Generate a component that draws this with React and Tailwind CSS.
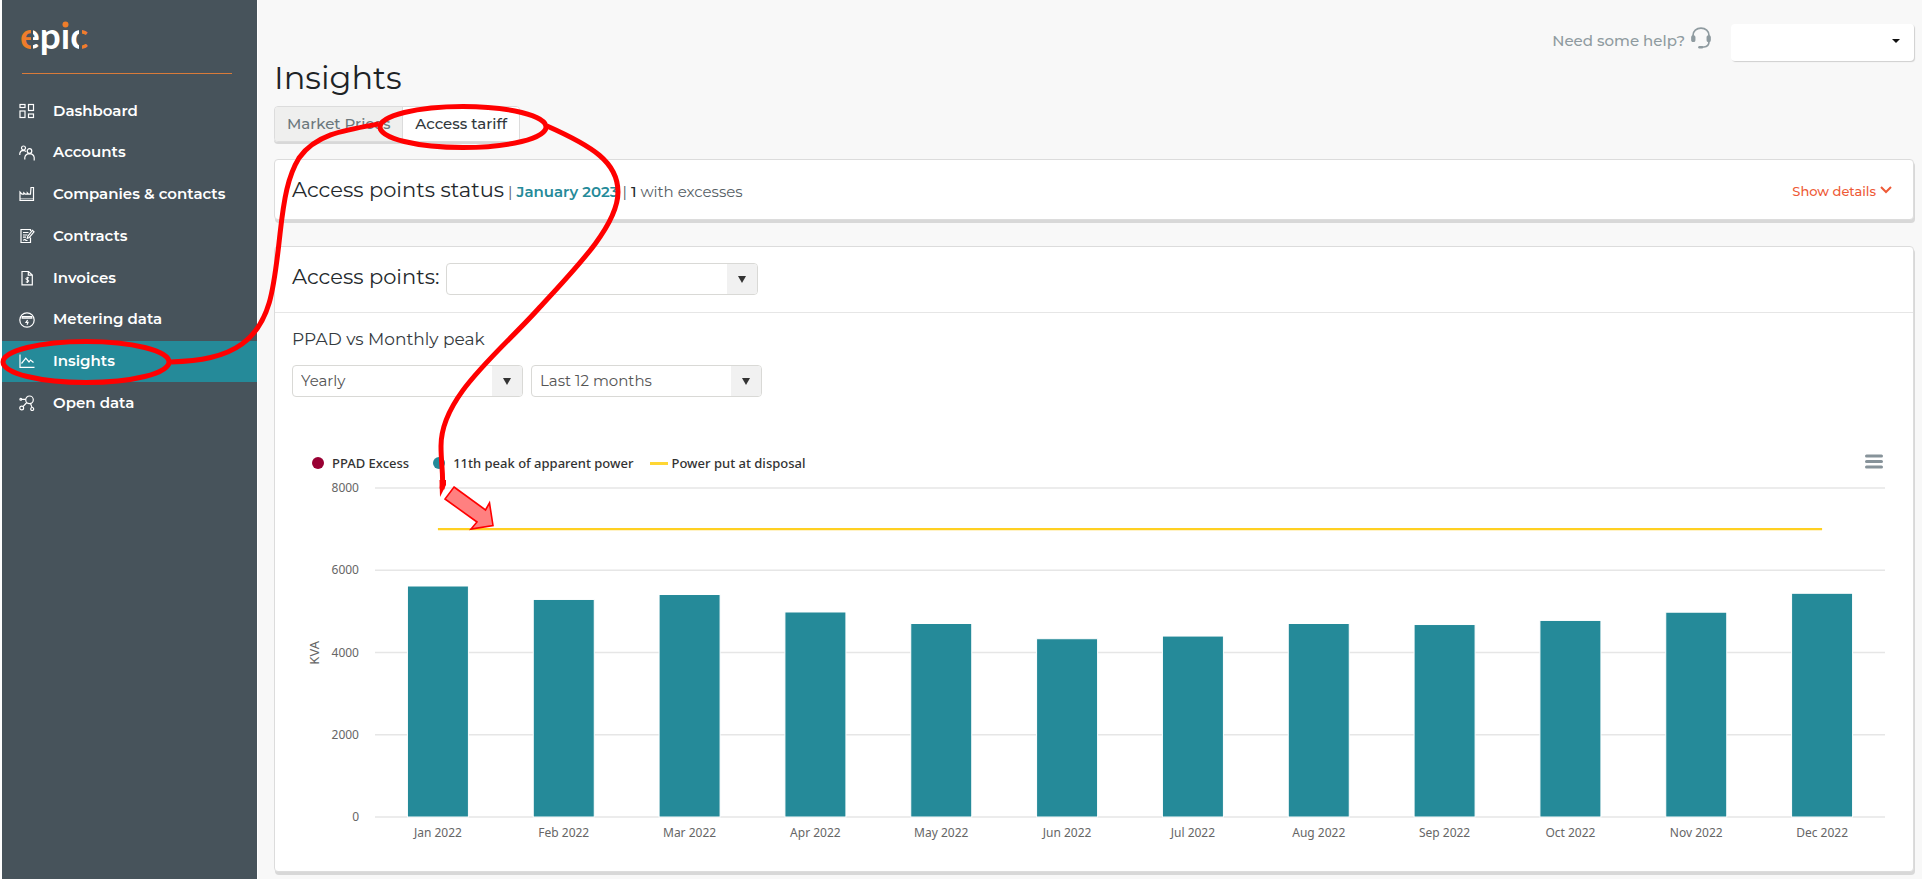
import React, { useState } from "react";
import clsx from "clsx";

const iconProps = {
    viewBox: "0 0 16 16",
    className: "w-4 h-4 shrink-0",
    fill: "none",
    stroke: "currentColor",
    strokeWidth: 1.2,
    "aria-hidden": true,
};

const DashboardIcon = () => (
    <svg {...iconProps}>
        <rect x="1" y="1.5" width="5" height="3" />
        <rect x="1" y="8" width="5" height="6.5" />
        <rect x="9.5" y="1.5" width="5" height="6" />
        <rect x="9.5" y="11" width="5" height="3.5" />
    </svg>
);

const AccountsIcon = () => (
    <svg {...iconProps}>
        <circle cx="4.5" cy="3" r="2" />
        <circle cx="10.5" cy="6" r="2.3" />
        <path d="M0.8 10V8.5Q1.2 5.5 4.3 5.3Q6 5.4 7 6.6M5.8 14.5V12.5Q6.3 8.7 10.5 8.6Q14.7 8.8 15.2 12.5V15.5" />
    </svg>
);

const CompaniesIcon = () => (
    <svg {...iconProps}>
        <path d="M1 6V14.4H14.5V1.5H12L11.5 8.2H9.5L8.3 6.8V8.2H6.5L4.8 6.8V8.2H3L1 6Z" />
        <path d="M1 12.5H14.5" strokeWidth="0.5" />
    </svg>
);

const ContractsIcon = () => (
    <svg {...iconProps}>
        <path d="M11.5 9.5V14.5H2V1.5H11.5V3M4 4.5H9.5M4 7H8.5M4 9.2H7M4 12.2L6 11.5L7 12.5H8.5" />
        <path d="M8.3 10.2L8.8 8.2L13.4 2.4L15 3.8L10.3 9.5Z" />
    </svg>
);

const InvoicesIcon = () => (
    <svg {...iconProps}>
        <path d="M3 1.5H9.5L13.3 5V14.8H3ZM9.3 1.5V5.2H13.3" />
        <path d="M10 7.8H8Q6.9 7.8 6.9 8.8Q6.9 9.8 8.3 9.8Q9.8 9.8 9.8 11Q9.8 12 8.5 12H6.8M8.4 6.8V13" strokeWidth="1" />
    </svg>
);

const MeteringIcon = () => (
    <svg {...iconProps}>
        <circle cx="8" cy="8" r="7.2" />
        <path d="M3.2 4.6H12.8V6.2H3.2Z" />
        <path d="M8.6 8L7 10.4H9L8 12.8" />
    </svg>
);

const InsightsIcon = () => (
    <svg {...iconProps}>
        <path d="M1 1.5V14.3H15.5" />
        <path d="M2.5 10.5L6.8 5.2L10 9L11.5 7L14.5 9.5" />
    </svg>
);

const OpenDataIcon = () => (
    <svg {...iconProps}>
        <circle cx="10.5" cy="4.8" r="3.8" />
        <circle cx="2.7" cy="13" r="1.9" />
        <circle cx="13.2" cy="14" r="1.5" />
        <circle cx="1.8" cy="4.2" r="0.9" />
        <path d="M2.7 4.3H6.7M7.8 7.5L4 11.6M11.5 8.5L13 12.4" />
    </svg>
);

const navItems = [
    { label: "Dashboard", icon: DashboardIcon },
    { label: "Accounts", icon: AccountsIcon },
    { label: "Companies & contacts", icon: CompaniesIcon },
    { label: "Contracts", icon: ContractsIcon },
    { label: "Invoices", icon: InvoicesIcon },
    { label: "Metering data", icon: MeteringIcon },
    { label: "Insights", icon: InsightsIcon },
    { label: "Open data", icon: OpenDataIcon },
];

const peaks = [
    { month: "Jan 2022", value: 5617 },
    { month: "Feb 2022", value: 5290 },
    { month: "Mar 2022", value: 5410 },
    { month: "Apr 2022", value: 4985 },
    { month: "May 2022", value: 4705 },
    { month: "Jun 2022", value: 4335 },
    { month: "Jul 2022", value: 4400 },
    { month: "Aug 2022", value: 4705 },
    { month: "Sep 2022", value: 4680 },
    { month: "Oct 2022", value: 4780 },
    { month: "Nov 2022", value: 4980 },
    { month: "Dec 2022", value: 5440 },
];

const MAX_KVA = 8000;
const PPAD_KVA = 7000;
const ticks = [8000, 6000, 4000, 2000, 0];

const Logo = () => (
    <svg viewBox="0 0 80 50" className="h-[50px] w-20 overflow-visible" role="img" aria-label="epic">
        <defs>
            <linearGradient id="epicFill" gradientUnits="userSpaceOnUse" x1="0" y1="0" x2="80" y2="0">
                <stop offset="0.112" stopColor="#ee7d2b" />
                <stop offset="0.112" stopColor="#47535b" />
                <stop offset="0.142" stopColor="#47535b" />
                <stop offset="0.142" stopColor="#fff" />
                <stop offset="0.715" stopColor="#fff" />
                <stop offset="0.715" stopColor="#47535b" />
                <stop offset="0.755" stopColor="#47535b" />
                <stop offset="0.755" stopColor="#ee7d2b" />
            </linearGradient>
        </defs>
        <text x="-2" y="31" fontFamily="Lato, sans-serif" fontWeight="700" fontSize="37" fill="url(#epicFill)">epic</text>
        <rect x="38" y="0" width="11" height="10" fill="#47535b" />
        <circle cx="43.5" cy="6.5" r="3" fill="#ee7d2b" />
    </svg>
);

const Sidebar = () => (
    <aside className="w-[258px] shrink-0 border-l-2 border-r border-white bg-[#47535b] text-white">
        <div className="mr-[25px] ml-5 h-[74px] border-b border-[#d97b3a] pt-[18px]">
            <Logo />
        </div>
        <nav className="mt-4 grid h-[334px] auto-rows-fr">
            {navItems.map(({ label, icon: Icon }) => (
                <a
                    key={label}
                    href="#"
                    className={clsx(
                        "flex items-center gap-[18px] pl-[17px] text-[15px] font-semibold",
                        label === "Insights" && "bg-[#258a99]"
                    )}
                >
                    <Icon />
                    {label}
                </a>
            ))}
        </nav>
    </aside>
);

const SelectBox = ({ id, label, options, className }) => (
    <div className={clsx("grid h-8 grid-cols-[1fr_30px] overflow-hidden rounded border border-[#d9d9d6] bg-white", className)}>
        <select
            id={id}
            aria-label={label}
            className="col-span-2 col-start-1 row-start-1 appearance-none bg-transparent pl-2 text-[15px] text-[#555] outline-none"
        >
            {options.map((option) => (
                <option key={option}>{option}</option>
            ))}
        </select>
        <span className="pointer-events-none col-start-2 row-start-1 flex items-center justify-center bg-[#f1f1f1]">
            <svg viewBox="0 0 8 7" className="h-[7px] w-2" fill="#333"><path d="M0 0H8L4 7Z" /></svg>
        </span>
    </div>
);

const Header = () => (
    <header className="flex items-start justify-between">
        <h1 className="mt-[58px] text-[32px] leading-10 text-[#1d2326]">Insights</h1>
        <div className="mt-6 flex h-[37px]">
            <a href="#" className="flex h-[34px] items-center gap-1.5 text-[15px] font-medium text-[#8f9ba0]">
                Need some help?
                <svg viewBox="0 0 20 22" className="mb-1.5 h-[22px] w-5" fill="none" stroke="currentColor" strokeWidth="1.7">
                    <path d="M2 9V8.5C2 4 5.5 1.2 10 1.2S18 4 18 8.5V14.5C18 17.5 16 19.8 13 20H9" />
                    <rect x="1" y="9" width="2.6" height="5.2" rx="1" fill="currentColor" />
                    <rect x="16.4" y="9" width="2.6" height="5.2" rx="1" fill="currentColor" />
                    <path d="M8.4 20.2H11" strokeWidth="2.4" strokeLinecap="round" />
                </svg>
            </a>
            <div className="ml-5 grid w-[183px] grid-cols-[1fr_36px] rounded bg-white shadow-[1px_1px_1px_#cfcfcf]">
                <select aria-label="Account" className="col-span-2 col-start-1 row-start-1 appearance-none bg-transparent outline-none">
                    <option></option>
                </select>
                <span className="pointer-events-none col-start-2 row-start-1 flex items-center justify-center pb-1">
                    <svg viewBox="0 0 8 4" className="h-1 w-2" fill="#111"><path d="M0 0H8L4 4Z" /></svg>
                </span>
            </div>
        </div>
    </header>
);

const Tabs = () => {
    const [active, setActive] = useState("Access tariff");

    return (
        <div role="tablist" className="mt-2 flex h-9 w-[246px] overflow-hidden rounded border border-[#dcdcdc] shadow-[0_2px_0_#d8d8d8]">
            {["Market Prices", "Access tariff"].map((tab) => (
                <button
                    key={tab}
                    role="tab"
                    aria-selected={tab === active}
                    onClick={() => setActive(tab)}
                    className={clsx(
                        "grow pt-px text-[15px] font-medium",
                        tab === active ? "border-l border-[#dcdcdc] bg-white text-[#30383c]" : "bg-[#efefee] text-[#6b777c]"
                    )}
                >
                    {tab}
                </button>
            ))}
        </div>
    );
};

const StatusCard = () => (
    <section className="mt-[17px] flex h-[61px] items-center justify-between rounded border border-[#dcdcdc] bg-white pr-[21px] pl-[17px] shadow-[1px_3px_0_#d8d8d8]">
        <div className="flex items-baseline gap-1 text-[15px] text-[#566065]">
            <h2 className="text-[21px] text-[#24292c]">Access points status</h2>
            <span>|</span>
            <span className="font-semibold text-[#258a99]">January 2023</span>
            <span>|</span>
            <span><b className="font-medium text-[#24292c]">1</b> with excesses</span>
        </div>
        <button className="flex items-center gap-1 pt-1 text-[13px] font-medium text-[#ee5a36]">
            Show details
            <svg viewBox="0 0 12 8" className="mb-1 h-2 w-3" fill="none" stroke="currentColor" strokeWidth="2">
                <path d="M1 1L6 6L11 1" />
            </svg>
        </button>
    </section>
);

const Legend = () => (
    <div className="flex items-center font-['Noto_Sans',sans-serif] text-[13px] leading-5 font-medium text-[#333]">
        <span className="mr-2 h-3 w-3 rounded-full bg-[#990033]" />
        PPAD Excess
        <span className="mr-2 ml-6 h-3 w-3 rounded-full bg-[#258a99]" />
        11th peak of apparent power
        <span className="mr-1 ml-4 h-[3px] w-[18px] bg-[#ffd633]" />
        Power put at disposal
        <button aria-label="Chart menu" className="mr-0.5 mb-1 ml-auto">
            <svg viewBox="0 0 18 15" className="h-[15px] w-[18px]" stroke="#87939a" strokeWidth="3" strokeLinecap="round">
                <path d="M1.5 2H16.5M1.5 7.5H16.5M1.5 13H16.5" />
            </svg>
        </button>
    </div>
);

const Plot = () => {
    const step = 100 / peaks.length;

    return (
        <svg className="h-[329px] w-full overflow-visible" role="img" aria-label="Monthly peak in KVA">
            {ticks.map((tick) => {
                const y = `${100 - (tick / MAX_KVA) * 100}%`;
                return <line key={tick} x1="0" x2="100%" y1={y} y2={y} stroke="#e6e6e6" strokeWidth="1.5" />;
            })}
            {peaks.map(({ month, value }, i) => (
                <svg key={month} x={`${(i + 0.5) * step}%`} overflow="visible">
                    <rect
                        x="-30.5"
                        y={`${100 - (value / MAX_KVA) * 100}%`}
                        width="61"
                        height={`${(value / MAX_KVA) * 100}%`}
                        fill="#258a99"
                        stroke="#fff"
                        strokeWidth="1"
                    />
                </svg>
            ))}
            <line
                x1={`${step / 2}%`}
                x2={`${100 - step / 2}%`}
                y1={`${100 - (PPAD_KVA / MAX_KVA) * 100}%`}
                y2={`${100 - (PPAD_KVA / MAX_KVA) * 100}%`}
                stroke="#ffd022"
                strokeWidth="2.4"
            />
        </svg>
    );
};

const ChartCard = () => (
    <section className="mt-[26px] rounded border border-[#dcdcdc] bg-white shadow-[1px_3px_0_#d8d8d8]">
        <div className="flex h-[66px] items-center gap-[7px] border-b border-[#e6e6e6] px-[17px] pb-px">
            <label htmlFor="access-points" className="pb-1 text-[21px] text-[#24292c]">Access points:</label>
            <SelectBox id="access-points" options={[""]} className="w-[312px]" />
        </div>
        <div className="px-[17px] pt-[14px]">
            <h3 className="text-[17px] leading-6 text-[#343a3e]">PPAD vs Monthly peak</h3>
            <div className="mt-[14px] flex gap-2">
                <SelectBox label="Granularity" options={["Yearly", "Monthly"]} className="w-[231px]" />
                <SelectBox label="Period" options={["Last 12 months", "Last 24 months"]} className="w-[231px]" />
            </div>
        </div>
        <div className="pt-14 pr-7 pb-[30px] pl-[37px]">
            <Legend />
            <div className="mt-[15px] flex font-['Noto_Sans',sans-serif] text-[12px] leading-4 text-[#666]">
                <div className="-ml-1.5 flex h-[329px] w-4 items-center text-[13px]">
                    <span className="rotate-180 [writing-mode:vertical-rl]">KVA</span>
                </div>
                <div className="-my-2 flex h-[345px] w-[37px] flex-col justify-between text-right">
                    {ticks.map((tick) => (
                        <span key={tick}>{tick}</span>
                    ))}
                </div>
                <div className="ml-4 grow">
                    <Plot />
                    <div className="mt-2 grid grid-cols-12 text-center">
                        {peaks.map(({ month }) => (
                            <span key={month}>{month}</span>
                        ))}
                    </div>
                </div>
            </div>
        </div>
    </section>
);

// hand-drawn walkthrough marks on top of the page
const Annotations = () => (
    <svg className="pointer-events-none absolute top-0 left-0 h-[560px] w-[640px]" fill="none" stroke="#f00" strokeWidth="5" aria-hidden="true">
        <ellipse cx="86" cy="362" rx="83" ry="20.5" />
        <ellipse cx="463" cy="127" rx="83" ry="20.5" />
        <path d="M171 362C200 361 224 357 242 344C271 323 274 288 280 234C284 198 288 176 299 158C316 134 345 130 379 124" />
        <path d="M547 126C592 146 618 162 618 192C618 224 580 264 540 307C500 352 441 396 441 446C441 465 444 478 442 489" />
        <path d="M440 497L439.5 480H446L446 485Z" fill="#f00" stroke="none" />
        <path d="M454 487L485.5 510L489.5 503L493 525.5L471 529L477 522L445 499Z" fill="#ff8080" strokeWidth="1.6" />
    </svg>
);

const App = () => {
    return (
        <div className="relative flex min-h-screen overflow-hidden bg-[#f8f8f8] font-[Montserrat,Inter,sans-serif]">
            <Sidebar />
            <main className="min-w-0 grow pr-2 pb-[7px] pl-4">
                <Header />
                <Tabs />
                <StatusCard />
                <ChartCard />
            </main>
            <Annotations />
        </div>
    );
};

export default App;
